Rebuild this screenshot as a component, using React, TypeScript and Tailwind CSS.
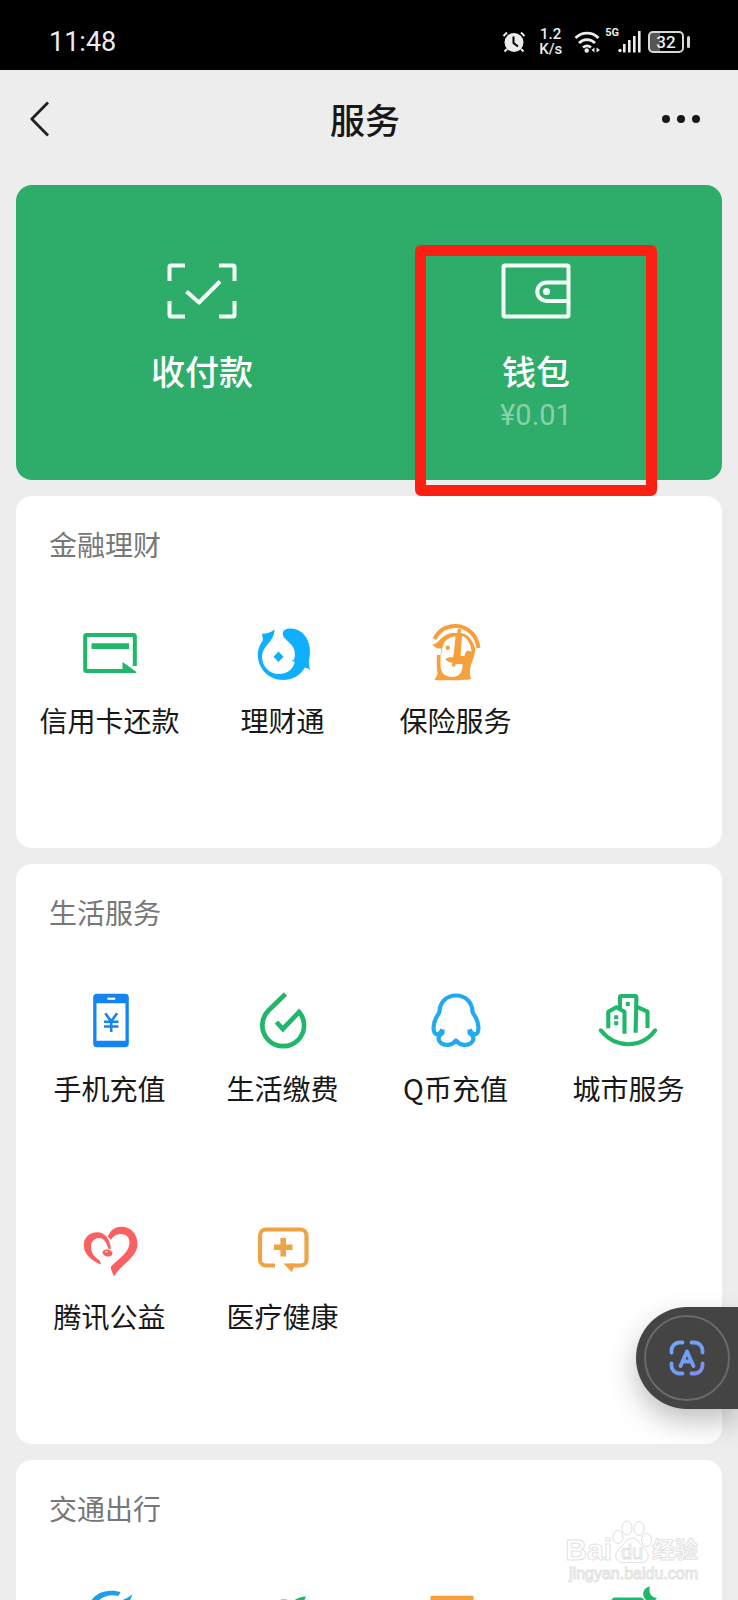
import React from 'react'

type Service = { label?: string; icon: React.ReactNode }

const GREEN = '#1fb76a'
const ORANGE = '#f79f3d'

function Icon({ children }: { children: React.ReactNode }) {
  return (
    <svg viewBox="0 0 66 66" fill="none" className="size-[66px]" aria-hidden="true">
      {children}
    </svg>
  )
}

const finance: Service[] = [
  {
    label: '信用卡还款',
    icon: (
      <Icon>
        <path d="M46 51H9.500a1.300 1.300 0 0 1-1.300-1.300V16.300A1.300 1.300 0 0 1 9.500 15h47a1.300 1.300 0 0 1 1.300 1.300V46" stroke={GREEN} strokeWidth="4" />
        <path d="M14.500 23.300H52V29H14.500z" fill={GREEN} />
        <path d="M45.500 42l14 10-.5.900H45.500z" fill={GREEN} />
      </Icon>
    ),
  },
  {
    label: '理财通',
    icon: (
      <Icon>
        <path
          d="M24.500 9.500C20.500 12.500 17 13.800 12 13.800L13 20C9 26 7.800 30 7.800 35 8 49 19 60 33 60c9 0 17-4 21.500-12 2-.5 4 .5 6 2.500-1.500-3.500-2-6.500-1.500-10.500 1.500-7 1.500-14-2-21C53.500 12 47 8.500 41 8.500c-5 0-8.500 1.500-8.200 5.500.4 5.500 7.200 7 10.700 14 2 4 1.800 8 .5 11.500-.7 1-1.500 1-2.700.5 1.300 1.200 2 1.700 3.500 1.700C43 50 36.500 54 29 54c-9.500 0-17-7.500-17-17C12 25.500 24.500 22 24.500 9.500z"
          fill="#10aeff"
        />
        <path d="M28.500 31.500l5 5.200-5 5.200-5-5.200z" fill="#10aeff" />
      </Icon>
    ),
  },
  {
    label: '保险服务',
    icon: (
      <Icon>
        <path d="M11.500 19C16 10 24 5.800 33 6c12 .5 21 9.500 22.500 22" stroke={ORANGE} strokeWidth="4" />
        <path d="M9.500 24.500c6 0 8-9.500 19-11.500h10c8 2 12 9 13.500 15.500.7 8-4.500 15-5 21-.3 3.500-.3 6.500 1.200 9.500-6 1.700-30 1.500-36.700 1 .8-2 3-4.500 3-7-.8-5-1-12-.5-18h3.500l1-6.500c-4 .5-7-1-9-4z" fill={ORANGE} />
        <path d="M20 26c1.500-6 6.500-9 12.500-9.500L30 44h9.500c.5 8-3 13-10.500 13-8 0-11.500-5-11.500-12V35l1-2c.3-2.500.5-4.500 1.500-7z" fill="#fff" />
        <path d="M39 16c6 2 9 9 9.500 16-3-2.500-6.500-1-7 4h-4z" fill="#fff" />
        <path d="M36.500 9L30.500 46.500" stroke={ORANGE} strokeWidth="3.400" />
        <circle cx="24.800" cy="27.700" r="2.200" fill={ORANGE} />
        <path d="M22.500 39c2-1.500 5-2 9-1.500v5c-4 .5-7 0-9-3.500z" fill={ORANGE} />
      </Icon>
    ),
  },
]

const life: Service[] = [
  {
    label: '手机充值',
    icon: (
      <Icon>
        <path
          d="M20 5.700h28a3.800 3.800 0 0 1 3.800 3.800v46a3.800 3.800 0 0 1-3.800 3.800H20a3.800 3.800 0 0 1-3.800-3.800v-46A3.800 3.800 0 0 1 20 5.700zM19.500 15.300v37.400h29V15.300z"
          fill="#1485ee"
          fillRule="evenodd"
        />
        <path d="M30.500 10.700h7.700" stroke="#fff" strokeWidth="2.200" />
        <path d="M28.300 25.300l5.900 8 5.900-8M34.200 33v11M27 33.700h14.500M27 38.500h14.500" stroke="#1485ee" strokeWidth="2.600" />
      </Icon>
    ),
  },
  {
    label: '生活缴费',
    icon: (
      <Icon>
        <path d="M35.500 6L18.500 22.500C14.500 26.500 12.300 31 12.300 37.300a20.900 20.900 0 0 0 41.800 0c0-5.300-1.900-9.800-5-13.300L32.800 41l-6.300-7" stroke={GREEN} strokeWidth="4.700" />
      </Icon>
    ),
  },
  {
    label: 'Q币充值',
    icon: (
      <Icon>
        <path
          d="M19.500 41.500c-1.500 2.500-4 5.500-6.500 4.500-3.500-1.500-3-11 .5-17 1-2 2.500-2.500 3-5.500C17 13.500 24 7.500 33 7.500s16 6 16.500 16c.5 3 2 3.500 3 5.500 3.500 6 4 15.500.5 17-2.500 1-5-2-6.500-4.500M19.500 41.500v3.500c-4 2-5 6-2.500 9 3.500 4.500 12.500 3.500 16-1.500 3.500 5 12.500 6 16 1.500 2.500-3 1.500-7-2.500-9v-3.500"
          stroke="#23a9f0"
          strokeWidth="4.200"
          strokeLinejoin="round"
        />
      </Icon>
    ),
  },
  {
    label: '城市服务',
    icon: (
      <Icon>
        <g stroke={GREEN} strokeWidth="4.100" strokeLinejoin="round">
          <path d="M4.800 42.300C12 51.500 21 56.200 32.200 56.200S52.500 51.500 59.200 42.300" strokeLinecap="round" />
          <path d="M12.300 40.300V23.700l8-4.400 8.200 4.400v22" />
          <path d="M23.900 21V9.500a1.500 1.500 0 0 1 1.500-1.500h13.500a1.500 1.500 0 0 1 1.500 1.500L39.600 44.700M40.500 18.700l11 5V40" />
        </g>
        <path d="M29.800 14h4v4h-4zM18.200 27.300h4v4h-4zM18.200 33.300h4v4h-4z" fill={GREEN} />
      </Icon>
    ),
  },
  {
    label: '腾讯公益',
    icon: (
      <Icon>
        <path d="M24.200 48.500C14 44.500 7 38.500 6.800 29c0-7.500 6-12.700 13.400-12.700 7 0 13 6 13.600 16.500l-2.300.5C30 26 26 21.500 21.500 22c-4.500.5-7.500 4-7.500 8.500 0 7 4 11 8.700 14z" fill="#fa5f62" />
        <path d="M30.800 20.500C33.500 14 38 10.700 44.500 10.700c9 0 16 7 16 17.100C60.500 41.500 45 47.500 37 60.500c-1.500-3.500-3-6.500-3.300-9.500C39 44.500 51.500 38 52.500 27.500c.5-5.500-3-9.500-8.500-9.500-4 0-8 2-10 6z" fill="#fa5f62" />
        <ellipse cx="30.500" cy="37" rx="5" ry="3.500" transform="rotate(12 30.500 37)" fill="#fa5f62" />
        <path d="M28 36l3-.3" stroke="#fff" strokeWidth="1" />
      </Icon>
    ),
  },
  {
    label: '医疗健康',
    icon: (
      <Icon>
        <path d="M25 49.500H16A6 6 0 0 1 10 43.500V19.500a6 6 0 0 1 6-6H50.500a6 6 0 0 1 6 6v24a6 6 0 0 1-6 6H39" stroke="#eea347" strokeWidth="4.200" />
        <path d="M33.500 47.500h11.300L42 56.300z" fill={ORANGE} />
        <path d="M33.200 22v18.600M23.900 31.300h18.600" stroke="#eea347" strokeWidth="5.600" />
      </Icon>
    ),
  },
]

const travel: Service[] = [
  {
    icon: (
      <Icon>
        <path d="M13 19C17 10 28 4 43.500 8l-2 4C33 10 25 12 19 19zM55.500 10.500C53 17 50 22 46 28L36 19c8-2 14-4.500 19.500-8.500z" fill="#1f9fe8" />
      </Icon>
    ),
  },
  {
    icon: (
      <Icon>
        <path d="M56 12.500c-5 0-10 2-14 5.500-4-2.500-8-3-12-2 6 2 10 7 10 14 7-4 13-10 16-17.500z" fill={GREEN} />
      </Icon>
    ),
  },
  {
    icon: (
      <Icon>
        <path d="M7.500 12.700a1 1 0 0 1 1-1h42v44h-43z" fill={ORANGE} />
      </Icon>
    ),
  },
  {
    icon: (
      <Icon>
        <path d="M15.500 56V17a3.500 3.500 0 0 1 3.500-3.500h25.500a3.500 3.500 0 0 1 3.500 3.500v39z" fill={GREEN} />
        <path d="M54 2.500a7.500 7.500 0 1 0 7 11.500C55.500 14 52 8 54 2.500z" fill={GREEN} />
      </Icon>
    ),
  },
]

function StatusBar() {
  return (
    <div className="flex h-[70px] shrink-0 items-center bg-black pt-3.5 pr-12 pl-[49px] font-[Roboto,sans-serif] text-[#ececec]">
      <span className="text-[27px] leading-8">11:48</span>
      <div className="ml-auto flex items-center">
        <svg viewBox="0 0 24 22" className="h-[22px] w-6" fill="none" aria-hidden="true">
          <circle cx="12" cy="11.500" r="9.500" fill="#ececec" />
          <path d="M1.500 5L5 1.500M22.500 5L19 1.500M5 18l-2.500 2.500M19 18l2.500 2.500" stroke="#ececec" strokeWidth="2" />
          <path d="M11.500 5.500V12l4.500 3.500" stroke="#000" strokeWidth="2" />
        </svg>
        <div className="ml-3 w-[25px] text-center text-[15px] leading-[15px] font-medium">
          <div>1.2</div>
          <div>K/s</div>
        </div>
        <svg viewBox="0 0 27 22" className="ml-[11px] h-[22px] w-[27px]" fill="none" aria-hidden="true">
          <path d="M1.500 7c6.500-6.500 16.500-6.500 23 0M5 12c4.500-4.500 11.500-4.500 16 0M9 16.500c2.500-2 5.500-2 8 0" stroke="#ececec" strokeWidth="2.800" />
          <circle cx="12.700" cy="19.500" r="2.200" fill="#ececec" />
          <path d="M20.500 16.500v5l-3-2.500zM22.500 16.500v5l3.500-2.500z" fill="#ececec" />
        </svg>
        <span className="ml-1 self-start font-[Roboto,sans-serif] text-[11px] leading-3 font-bold">5G</span>
        <svg viewBox="0 0 23 22" className="-ml-px h-[22px] w-[23px]" fill="#ececec" aria-hidden="true">
          <circle cx="2" cy="19.500" r="1.700" />
          <path d="M5 13h2.600v8.500H5zM10 9h2.600v12.500H10zM15 5h2.600v16.500H15zM20 0h2.600v21.500H20z" />
        </svg>
        <div className="ml-[7px] flex items-center">
          <div className="flex h-[22px] w-9 items-center justify-center rounded-[5px] border-2 border-[#d8d8d8] bg-linear-to-r from-[#555] from-30% to-black to-30% text-[17px] leading-none font-medium">
            32
          </div>
          <div className="ml-[3px] h-3 w-[3px] rounded-sm bg-[#d8d8d8]" />
        </div>
      </div>
    </div>
  )
}

function Header() {
  return (
    <header className="flex h-[98px] shrink-0 items-center pr-[38px] pl-[30px]">
      <div className="flex flex-1">
        <button aria-label="返回">
          <svg viewBox="0 0 20 36" className="h-9 w-5" fill="none" aria-hidden="true">
            <path d="M18 1.500L1.800 18l16.200 16.500" stroke="#222" strokeWidth="2.800" strokeLinejoin="round" />
          </svg>
        </button>
      </div>
      <h1 className="text-[35px] leading-10 font-medium text-[#181818]">服务</h1>
      <div className="flex flex-1 justify-end">
        <button aria-label="更多" className="flex h-9 items-center gap-[7px]">
          <span className="size-2 rounded-full bg-[#181818]" />
          <span className="size-2 rounded-full bg-[#181818]" />
          <span className="size-2 rounded-full bg-[#181818]" />
        </button>
      </div>
    </header>
  )
}

function PayCard() {
  return (
    <section className="mt-[17px] grid h-[295px] shrink-0 grid-cols-2 rounded-2xl bg-[#2eac69] px-[19px] text-white">
      <button className="flex flex-col items-center pt-[78px]">
        <svg viewBox="0 0 70 56" className="h-14 w-[70px]" fill="none" stroke="#f2fff6" strokeWidth="4" aria-hidden="true">
          <path d="M2.500 18V4a1.500 1.500 0 0 1 1.500-1.500h14M52 2.500h14A1.500 1.500 0 0 1 67.500 4v14M67.500 38v14a1.500 1.500 0 0 1-1.500 1.500H52M18 53.500H4A1.500 1.500 0 0 1 2.500 52V38" />
          <path d="M19.500 28.500l12.500 11 21-21" strokeLinejoin="round" />
        </svg>
        <span className="mt-8 text-[34px] leading-10 font-medium">收付款</span>
      </button>
      <button className="relative flex flex-col items-center pt-[78px]">
        <svg viewBox="0 0 70 56" className="h-14 w-[70px]" fill="none" stroke="#f2fff6" strokeWidth="4" aria-hidden="true">
          <rect x="2.500" y="2.500" width="65" height="51" rx="1.500" />
          <path d="M67 19.500H45.500a9.200 9.200 0 0 0 0 18.400H67" />
          <circle cx="45.500" cy="28.500" r="3.600" fill="#f2fff6" stroke="none" />
        </svg>
        <span className="mt-8 text-[34px] leading-10 font-medium">钱包</span>
        <span className="mt-1 font-[Roboto,sans-serif] text-[29px] leading-10 text-white/45">¥0.01</span>
        <span className="absolute inset-x-[46px] top-[60px] -bottom-4 rounded-md border-[11px] border-[#fc2012]" />
      </button>
    </section>
  )
}

function ServiceCard({ title, items }: { title: string; items: Service[] }) {
  return (
    <section className="mt-4 shrink-0 rounded-2xl bg-white px-[7px]">
      <h2 className="h-[124px] px-[26px] pt-7 text-[28px] leading-10 text-[#777]">{title}</h2>
      <div className="grid grid-cols-4">
        {items.map((item, i) =>
          item.label ? (
            <button key={i} className="flex h-[228px] flex-col items-center gap-3.5">
              {item.icon}
              <span className="text-[28px] leading-10 whitespace-nowrap text-[#181818]">{item.label}</span>
            </button>
          ) : (
            <div key={i} className="flex h-[228px] flex-col items-center">
              {item.icon}
            </div>
          )
        )}
      </div>
    </section>
  )
}

function ScanButton() {
  return (
    <button
      aria-label="识别文字"
      className="absolute right-0 bottom-[191px] flex h-[102px] w-[102px] items-center rounded-l-full bg-[#444] pl-2 shadow-[0_12px_28px_rgba(0,0,0,0.25)]"
    >
      <span className="flex size-[86px] items-center justify-center rounded-full border-2 border-[#6a6a6a]">
        <svg viewBox="0 0 36 36" className="size-9" fill="none" aria-hidden="true">
          <defs>
            <linearGradient id="scan" x1="0" y1="0" x2="36" y2="36" gradientUnits="userSpaceOnUse">
              <stop stopColor="#74a9f5" />
              <stop offset="0.600" stopColor="#6f9cf8" />
              <stop offset="1" stopColor="#8f86ee" />
            </linearGradient>
          </defs>
          <g stroke="url(#scan)" strokeWidth="3.800" strokeLinecap="round" strokeLinejoin="round">
            <path d="M2.500 12.500v-2a8 8 0 0 1 8-8h3M22.500 2.500h3a8 8 0 0 1 8 8v2M33.500 23.500v2a8 8 0 0 1-8 8h-3M13.500 33.500h-3a8 8 0 0 1-8-8v-2" />
            <path d="M11.500 26L18 11.500 24.500 26M14 21.500h8" />
          </g>
        </svg>
      </span>
    </button>
  )
}

function Watermark() {
  return (
    <div className="pointer-events-none absolute right-10 bottom-4 font-['Liberation_Sans','Noto_Sans_CJK_SC',sans-serif] text-white [-webkit-text-stroke:1px_#e2e2e2]">
      <div className="flex items-end">
        <span className="text-[30px] leading-7 font-bold">Bai</span>
        <span className="relative">
          <svg viewBox="0 0 40 44" className="h-11 w-10" fill="#fff" stroke="#dedede" aria-hidden="true">
            <ellipse cx="6" cy="17" rx="5" ry="6.500" />
            <ellipse cx="15" cy="8" rx="5" ry="7" />
            <ellipse cx="27" cy="8.500" rx="5" ry="7" />
            <ellipse cx="34.500" cy="20" rx="5" ry="6.500" />
            <path d="M20 18c5 0 7 5 11 9s6 7 5 11c-2 6-9 4.500-16 4.500S6 44 4 38c-1-4 1-7 5-11s6-9 11-9z" />
          </svg>
          <span className="absolute inset-x-0 bottom-0.5 text-center text-xl leading-5">du</span>
        </span>
        <span className="text-[23px] leading-7 font-bold">经验</span>
      </div>
      <div className="text-right text-base leading-5">jingyan.baidu.com</div>
    </div>
  )
}

export default function App() {
  return (
    <div className="relative flex h-screen flex-col overflow-hidden bg-[#ededed] font-['Noto_Sans_CJK_SC',sans-serif]">
      <StatusBar />
      <Header />
      <main className="flex flex-col px-4">
        <PayCard />
        <ServiceCard title="金融理财" items={finance} />
        <ServiceCard title="生活服务" items={life} />
        <ServiceCard title="交通出行" items={travel} />
      </main>
      <ScanButton />
      <Watermark />
    </div>
  )
}
